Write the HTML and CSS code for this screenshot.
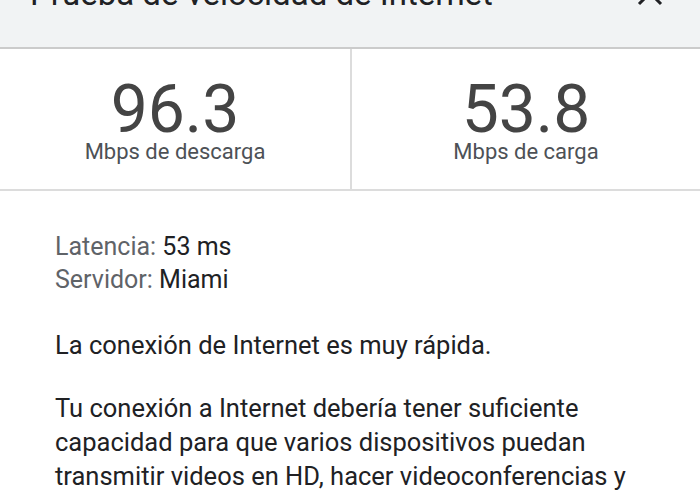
FILE: index.html
```html
<!DOCTYPE html>
<html lang="es">
<head>
  <meta charset="UTF-8">
  <meta name="viewport" content="width=device-width, initial-scale=1.0">
  <title>Prueba de velocidad de Internet</title>
  <link rel="stylesheet" href="styles.css">
</head>
<body>
  <div class="header">
    <h1 class="title">Prueba de velocidad de Internet</h1>
    <svg class="close" width="26" height="26" viewBox="0 0 26 26">
      <path d="M2 2 L24 24 M24 2 L2 24" stroke="#202124" stroke-width="3" fill="none"/>
    </svg>
  </div>

  <div class="stats">
    <div class="stat">
      <div class="number">96.3</div>
      <div class="unit">Mbps de descarga</div>
    </div>
    <div class="stat">
      <div class="number">53.8</div>
      <div class="unit">Mbps de carga</div>
    </div>
  </div>

  <div class="details">
    <div class="info">
      <div><span class="key">Latencia:</span> 53 ms</div>
      <div><span class="key">Servidor:</span> Miami</div>
    </div>
    <p class="summary">La conexión de Internet es muy rápida.</p>
    <p class="desc">Tu conexión a Internet debería tener suficiente capacidad para que varios dispositivos puedan transmitir videos en HD, hacer videoconferencias y jugar al mismo tiempo.</p>
  </div>
</body>
</html>
```

FILE: styles.css
```css
body {
  margin: 0;
  font-family: Roboto, "Noto Sans", sans-serif;
  color: #202124;
  background: #fff;
  overflow: hidden;
}
.header {
  margin-top: -26px;
  height: 75px;
  box-sizing: border-box;
  background: #f1f3f4;
  border-bottom: 2px solid #cbcbcb;
  display: flex;
  justify-content: space-between;
  align-items: flex-start;
  padding: 0 37px 0 30px;
}
.title {
  margin: 0;
  font-size: 33px;
  font-weight: 400;
  line-height: 40px;
}
.close {
  margin-top: 6px;
}
.stats {
  display: grid;
  grid-template-columns: 350px 1fr;
  height: 142px;
  box-sizing: border-box;
  border-bottom: 2px solid #dcdcdc;
}
.stat {
  text-align: center;
  padding-top: 29px;
  color: #444;
}
.stat + .stat {
  border-left: 2px solid #dcdcdc;
}
.number {
  font-size: 66px;
  line-height: 64px;
}
.unit {
  font-size: 22px;
  line-height: 20px;
  color: #4d5156;
}
.details {
  padding: 39px 20px 0 55px;
}
.info {
  font-size: 25px;
  line-height: 33px;
}
.key {
  color: #5f6368;
}
.summary {
  margin: 32px 0 0;
  font-size: 25.5px;
  line-height: 34px;
}
.desc {
  margin: 29px 0 0;
  font-size: 25.5px;
  line-height: 34px;
  max-width: 600px;
}
```
